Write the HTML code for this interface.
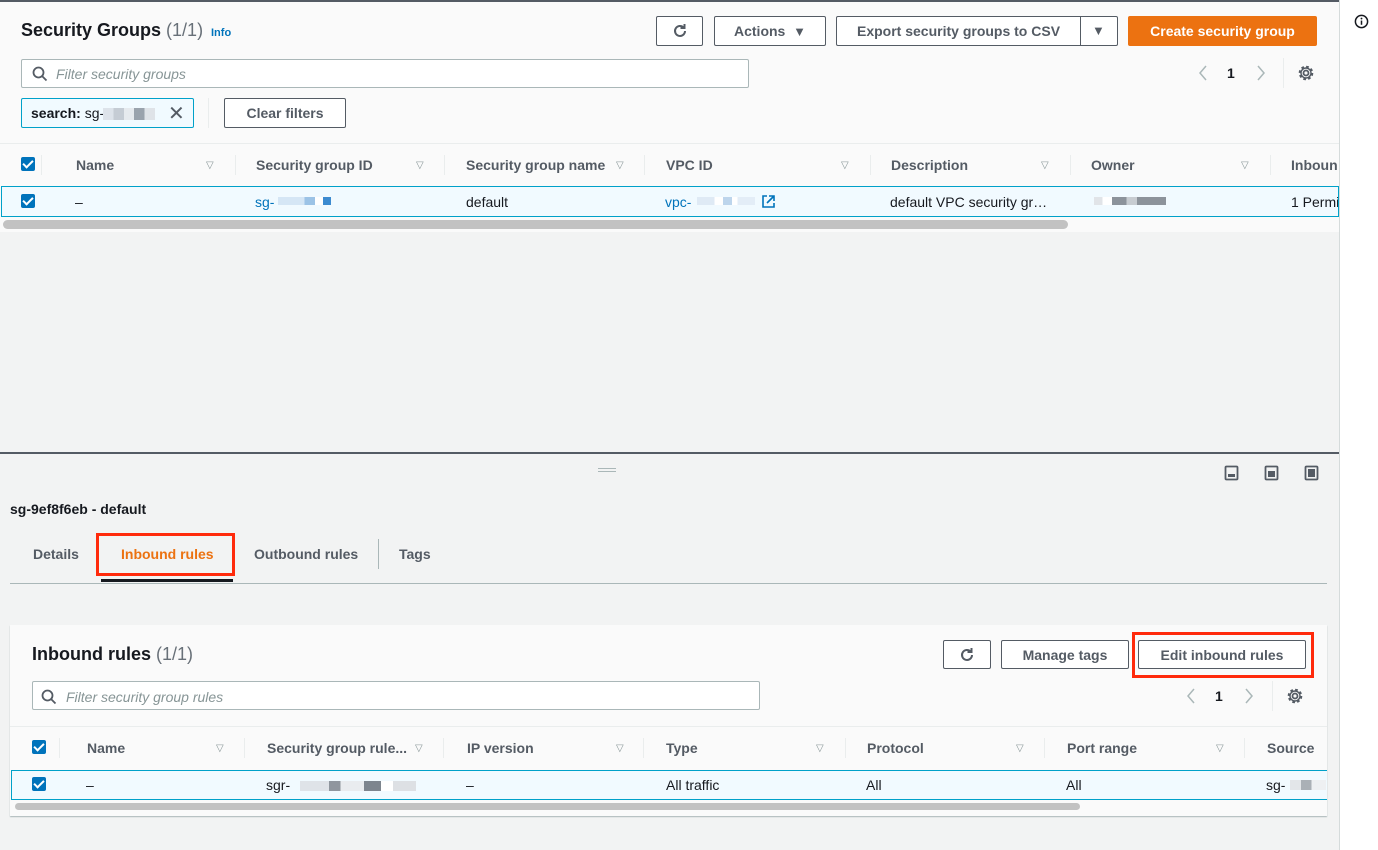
<!DOCTYPE html>
<html><head><style>
*{box-sizing:border-box;margin:0;padding:0}
body{width:1378px;height:850px;background:#f2f3f3;font-family:"Liberation Sans",sans-serif;font-size:14px;color:#16191f;position:relative;overflow:hidden}
.a{position:absolute}
.btn{position:absolute;border:1px solid #545b64;background:#fff;color:#545b64;font-weight:bold;font-size:14px;display:flex;align-items:center;justify-content:center;border-radius:2px}
.th{position:absolute;font-weight:bold;color:#545b64;font-size:14px}
.tri{position:absolute;color:#879596;font-size:10px}
.sep{position:absolute;width:1px;background:#eaeded}
.cb{position:absolute;width:14px;height:14px;background:#0073bb;border-radius:2px}
.cb:after{content:"";position:absolute;left:4px;top:1px;width:4px;height:8px;border:solid #fff;border-width:0 2px 2px 0;transform:rotate(45deg)}
.blur{position:absolute;height:10px;background:linear-gradient(90deg,#dde3ea 0 20%,#c5ccd4 20% 40%,#e6eaee 40% 60%,#9aa3ad 60% 80%,#dfe3e8 80%)}
.inp{position:absolute;background:#fff;border:1px solid #aab7b8;border-radius:2px}
.ph{position:absolute;font-style:italic;color:#879596;font-size:14px}
</style></head><body>
<div class="a" style="left:0;top:0;width:1339px;height:232px;background:#fafafa;border-top:2px solid #545b64"></div>
<div class="a" style="left:1339px;top:0;width:39px;height:850px;background:#fff;border-left:1px solid #d5dbdb"></div>
<svg class="a" style="left:1354px;top:14px" width="15" height="15" viewBox="0 0 16 16"><circle cx="8" cy="8" r="6.5" fill="none" stroke="#16191f" stroke-width="1.6"/><rect x="7.2" y="7" width="1.6" height="4.5" fill="#16191f"/><circle cx="8" cy="4.8" r="1" fill="#16191f"/></svg>

<div class="a" style="left:21px;top:20px;font-size:18px;font-weight:bold">Security Groups <span style="font-weight:normal;color:#687078">(1/1)</span></div>
<div class="a" style="left:211px;top:27px;font-size:11px;font-weight:bold;color:#0073bb">Info</div>

<div class="btn" style="left:656px;top:16px;width:47px;height:30px"><svg width="16" height="16" viewBox="0 0 16 16"><path d="M13 8a5 5 0 1 1-1.5-3.6" fill="none" stroke="#545b64" stroke-width="2"/><path d="M12.5 1v4h-4" fill="none" stroke="#545b64" stroke-width="2"/></svg></div>
<div class="btn" style="left:714px;top:16px;width:112px;height:30px">Actions&nbsp;&nbsp;<span style="font-size:13px">▼</span></div>
<div class="btn" style="left:836px;top:16px;width:282px;height:30px;justify-content:flex-start;padding-left:20px">Export security groups to CSV</div>
<div class="a" style="left:1080px;top:16px;width:1px;height:30px;background:#545b64"></div>
<div class="a" style="left:1092px;top:23px;font-size:13px;color:#545b64">▼</div>
<div class="btn" style="left:1128px;top:16px;width:189px;height:30px;background:#ec7211;border-color:#ec7211;color:#fff">Create security group</div>

<div class="inp" style="left:21px;top:59px;width:728px;height:29px"></div>
<svg class="a" style="left:32px;top:66px" width="16" height="16" viewBox="0 0 16 16"><circle cx="6.5" cy="6.5" r="5" fill="none" stroke="#545b64" stroke-width="1.8"/><path d="M10 10l4.5 4.5" stroke="#545b64" stroke-width="1.8"/></svg>
<div class="ph" style="left:56px;top:66px">Filter security groups</div>
<svg class="a" style="left:1196px;top:64px" width="80" height="18"><path d="M10 2L4 9l6 7" fill="none" stroke="#aab7b8" stroke-width="1.5"/><path d="M62 2l6 7-6 7" fill="none" stroke="#aab7b8" stroke-width="1.5"/></svg>
<div class="a" style="left:1227px;top:65px;font-weight:bold">1</div>
<div class="a" style="left:1283px;top:58px;width:1px;height:30px;background:#eaeded"></div>
<svg class="a" style="left:1297px;top:64px" width="18" height="18" viewBox="0 0 18 18"><circle cx="9" cy="9" r="2.5" fill="none" stroke="#545b64" stroke-width="1.8"/><circle cx="9" cy="9" r="6" fill="none" stroke="#545b64" stroke-width="2.6" stroke-dasharray="2.6 2.1"/><circle cx="9" cy="9" r="5" fill="none" stroke="#545b64" stroke-width="1.4"/></svg>

<div class="a" style="left:21px;top:98px;width:173px;height:30px;background:#f1faff;border:1px solid #00a1c9;border-radius:2px"></div>
<div class="a" style="left:31px;top:105px;font-weight:bold;font-size:14px">search: <span style="font-weight:normal">sg-</span></div>
<div class="blur" style="left:103px;top:108px;width:52px;height:12px"></div>
<div class="a" style="left:168px;top:101px;font-size:20px;color:#545b64">✕</div>
<div class="a" style="left:208px;top:98px;width:1px;height:30px;background:#eaeded"></div>
<div class="btn" style="left:224px;top:98px;width:122px;height:30px">Clear filters</div>

<div class="a" style="left:0;top:143px;width:1339px;height:1px;background:#eaeded"></div>
<div class="a" style="left:0;top:144px;width:1339px;height:42px;background:#fafafa"></div>
<div class="cb" style="left:21px;top:157px"></div>
<div class="sep" style="left:41px;top:155px;height:20px"></div>
<div class="th" style="left:76px;top:157px">Name</div><div class="tri" style="left:206px;top:160px">▽</div>
<div class="sep" style="left:235px;top:155px;height:20px"></div>
<div class="th" style="left:256px;top:157px">Security group ID</div><div class="tri" style="left:416px;top:160px">▽</div>
<div class="sep" style="left:444px;top:155px;height:20px"></div>
<div class="th" style="left:466px;top:157px">Security group name</div><div class="tri" style="left:616px;top:160px">▽</div>
<div class="sep" style="left:644px;top:155px;height:20px"></div>
<div class="th" style="left:666px;top:157px">VPC ID</div><div class="tri" style="left:841px;top:160px">▽</div>
<div class="sep" style="left:870px;top:155px;height:20px"></div>
<div class="th" style="left:891px;top:157px">Description</div><div class="tri" style="left:1041px;top:160px">▽</div>
<div class="sep" style="left:1070px;top:155px;height:20px"></div>
<div class="th" style="left:1091px;top:157px">Owner</div><div class="tri" style="left:1241px;top:160px">▽</div>
<div class="sep" style="left:1270px;top:155px;height:20px"></div>
<div class="th" style="left:1291px;top:157px;width:47px;overflow:hidden;white-space:nowrap">Inbound</div>

<div class="a" style="left:1px;top:186px;width:1338px;height:31px;background:#f1faff;border:1px solid #00a1c9"></div>
<div class="cb" style="left:21px;top:194px"></div>
<div class="a" style="left:75px;top:194px">–</div>
<div class="a" style="left:255px;top:194px;color:#0073bb">sg-</div>
<div class="blur" style="left:278px;top:197px;width:53px;height:8px;background:linear-gradient(90deg,#d5e6f5 0 50%,#9cc3e6 50% 70%,#fff 70% 85%,#3d8bd0 85%)"></div>
<div class="a" style="left:466px;top:194px">default</div>
<div class="a" style="left:665px;top:194px;color:#0073bb">vpc-</div>
<div class="blur" style="left:697px;top:197px;width:58px;height:8px;background:linear-gradient(90deg,#dfeaf5 0 30%,#fff 30% 45%,#bdd5ec 45% 60%,#fff 60% 70%,#e3edf7 70%)"></div>
<svg class="a" style="left:762px;top:195px" width="13" height="13" viewBox="0 0 13 13"><path d="M5 1H1v11h11V8M7 1h5v5M12 1L5 8" fill="none" stroke="#0073bb" stroke-width="1.6"/></svg>
<div class="a" style="left:890px;top:194px">default VPC security gr…</div>
<div class="blur" style="left:1094px;top:197px;width:72px;height:8px;background:linear-gradient(90deg,#e1e4e8 0 12%,#fff 12% 25%,#8c939b 25% 45%,#c7ccd1 45% 60%,#8c939b 60%)"></div>
<div class="a" style="left:1291px;top:194px;width:47px;overflow:hidden;white-space:nowrap">1 Permission</div>
<div class="a" style="left:3px;top:220px;width:1065px;height:9px;background:#c2c2c2;border-radius:5px"></div>

<div class="a" style="left:0;top:452px;width:1339px;height:2px;background:#545b64"></div>
<div class="a" style="left:598px;top:468px;width:18px;height:1px;background:#aab7b8"></div>
<div class="a" style="left:598px;top:471px;width:18px;height:1px;background:#aab7b8"></div>
<svg class="a" style="left:1224px;top:465px" width="110" height="16"><g fill="none" stroke="#545b64" stroke-width="1.8"><rect x="1.5" y="1.5" width="12" height="13" rx="1"/><rect x="41.5" y="1.5" width="12" height="13" rx="1"/><rect x="81.5" y="1.5" width="12" height="13" rx="1"/></g><rect x="4" y="9" width="7" height="3" fill="#545b64"/><rect x="44" y="6" width="7" height="6" fill="#545b64"/><rect x="84" y="4" width="7" height="8" fill="#545b64"/></svg>

<div class="a" style="left:10px;top:501px;font-weight:bold;font-size:14px">sg-9ef8f6eb - default</div>
<div class="a" style="left:33px;top:546px;font-weight:bold;color:#545b64">Details</div>
<div class="a" style="left:121px;top:546px;font-weight:bold;color:#ec7211">Inbound rules</div>
<div class="a" style="left:96px;top:533px;width:139px;height:43px;border:3px solid #ff2a0b"></div>
<div class="a" style="left:101px;top:579px;width:132px;height:3px;background:#16191f"></div>
<div class="a" style="left:254px;top:546px;font-weight:bold;color:#545b64">Outbound rules</div>
<div class="a" style="left:378px;top:539px;width:1px;height:30px;background:#aab7b8"></div>
<div class="a" style="left:399px;top:546px;font-weight:bold;color:#545b64">Tags</div>
<div class="a" style="left:10px;top:583px;width:1317px;height:1px;background:#aab7b8"></div>

<div class="a" style="left:10px;top:625px;width:1317px;height:191px;background:#fafafa;box-shadow:0 1px 1px #aab7b8"></div>
<div class="a" style="left:32px;top:644px;font-size:18px;font-weight:bold">Inbound rules <span style="font-weight:normal;color:#687078">(1/1)</span></div>
<div class="btn" style="left:943px;top:640px;width:48px;height:29px"><svg width="16" height="16" viewBox="0 0 16 16"><path d="M13 8a5 5 0 1 1-1.5-3.6" fill="none" stroke="#545b64" stroke-width="2"/><path d="M12.5 1v4h-4" fill="none" stroke="#545b64" stroke-width="2"/></svg></div>
<div class="btn" style="left:1001px;top:640px;height:29px;width:128px">Manage tags</div>
<div class="btn" style="left:1138px;top:640px;width:168px;height:29px">Edit inbound rules</div>
<div class="a" style="left:1132px;top:632px;width:182px;height:46px;border:3px solid #ff2a0b"></div>

<div class="inp" style="left:32px;top:681px;width:728px;height:29px"></div>
<svg class="a" style="left:41px;top:689px" width="16" height="16" viewBox="0 0 16 16"><circle cx="6.5" cy="6.5" r="5" fill="none" stroke="#545b64" stroke-width="1.8"/><path d="M10 10l4.5 4.5" stroke="#545b64" stroke-width="1.8"/></svg>
<div class="ph" style="left:66px;top:689px">Filter security group rules</div>
<svg class="a" style="left:1184px;top:687px" width="80" height="18"><path d="M10 2L4 9l6 7" fill="none" stroke="#aab7b8" stroke-width="1.5"/><path d="M62 2l6 7-6 7" fill="none" stroke="#aab7b8" stroke-width="1.5"/></svg>
<div class="a" style="left:1215px;top:688px;font-weight:bold">1</div>
<div class="a" style="left:1272px;top:681px;width:1px;height:30px;background:#eaeded"></div>
<svg class="a" style="left:1286px;top:687px" width="18" height="18" viewBox="0 0 18 18"><circle cx="9" cy="9" r="2.5" fill="none" stroke="#545b64" stroke-width="1.8"/><circle cx="9" cy="9" r="6" fill="none" stroke="#545b64" stroke-width="2.6" stroke-dasharray="2.6 2.1"/><circle cx="9" cy="9" r="5" fill="none" stroke="#545b64" stroke-width="1.4"/></svg>

<div class="a" style="left:10px;top:726px;width:1317px;height:1px;background:#eaeded"></div>
<div class="cb" style="left:32px;top:740px"></div>
<div class="sep" style="left:59px;top:738px;height:20px"></div>
<div class="th" style="left:87px;top:740px">Name</div><div class="tri" style="left:216px;top:743px">▽</div>
<div class="sep" style="left:244px;top:738px;height:20px"></div>
<div class="th" style="left:267px;top:740px">Security group rule...</div><div class="tri" style="left:415px;top:743px">▽</div>
<div class="sep" style="left:443px;top:738px;height:20px"></div>
<div class="th" style="left:467px;top:740px">IP version</div><div class="tri" style="left:616px;top:743px">▽</div>
<div class="sep" style="left:643px;top:738px;height:20px"></div>
<div class="th" style="left:666px;top:740px">Type</div><div class="tri" style="left:816px;top:743px">▽</div>
<div class="sep" style="left:845px;top:738px;height:20px"></div>
<div class="th" style="left:867px;top:740px">Protocol</div><div class="tri" style="left:1016px;top:743px">▽</div>
<div class="sep" style="left:1044px;top:738px;height:20px"></div>
<div class="th" style="left:1067px;top:740px">Port range</div><div class="tri" style="left:1216px;top:743px">▽</div>
<div class="sep" style="left:1244px;top:738px;height:20px"></div>
<div class="th" style="left:1267px;top:740px">Source</div>

<div class="a" style="left:11px;top:770px;width:1316px;height:30px;background:#f1faff;border-top:1px solid #00a1c9;border-bottom:1px solid #00a1c9;border-left:1px solid #00a1c9"></div>
<div class="cb" style="left:32px;top:777px"></div>
<div class="a" style="left:86px;top:777px">–</div>
<div class="a" style="left:266px;top:777px">sgr-</div>
<div class="blur" style="left:300px;top:781px;width:116px;height:10px;background:linear-gradient(90deg,#dfe3e8 0 25%,#8f969e 25% 35%,#e9ecef 35% 55%,#7d858e 55% 70%,#fff 70% 80%,#dde0e4 80%)"></div>
<div class="a" style="left:466px;top:777px">–</div>
<div class="a" style="left:666px;top:777px">All traffic</div>
<div class="a" style="left:866px;top:777px">All</div>
<div class="a" style="left:1066px;top:777px">All</div>
<div class="a" style="left:1266px;top:777px">sg-</div>
<div class="blur" style="left:1290px;top:780px;width:36px;height:10px;background:linear-gradient(90deg,#e3e6e9 0 30%,#aab0b6 30% 60%,#eef0f2 60%)"></div>
<div class="a" style="left:15px;top:803px;width:1065px;height:7px;background:#c2c2c2;border-radius:4px"></div>
</body></html>
